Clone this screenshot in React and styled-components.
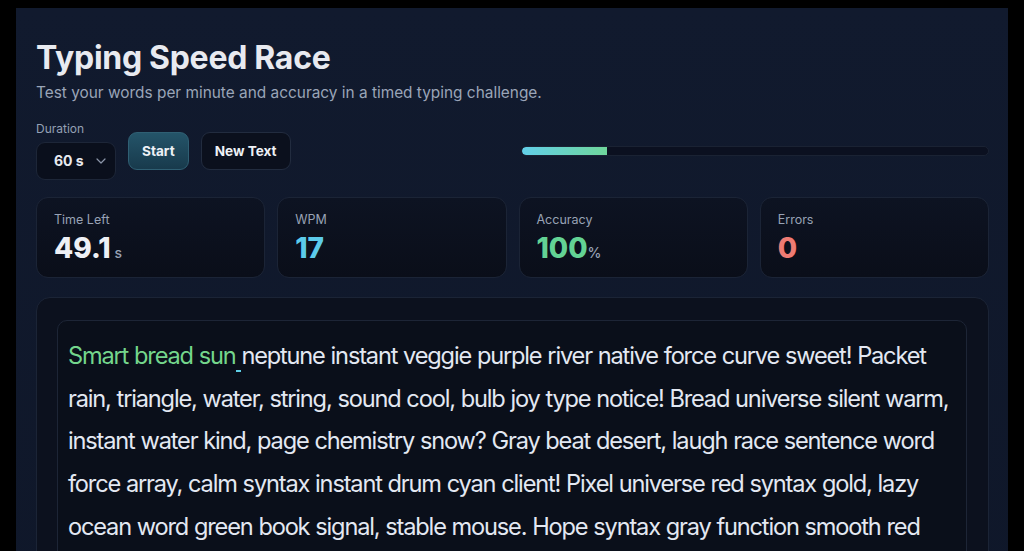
import styled, { createGlobalStyle } from "styled-components";

const GlobalStyle = createGlobalStyle`
  html, body {
    margin: 0;
    padding: 0;
    background: #000;
    overflow: hidden;
  }
  body {
    font-family: Inter, "Noto Sans", "Liberation Sans", sans-serif;
    color: #e5e7eb;
  }
`

const Panel = styled.main`
  margin: 8px 16px 0;
  padding: 20px 19px 40px 20px;
  background: linear-gradient(180deg, #111a2e 0%, #0f1729 100%);
  min-height: 600px;
`

const Title = styled.h1`
  margin: 10px 0 0;
  font-size: 32px;
  font-weight: 700;
  line-height: 40px;
  color: #e8eaf0;
  letter-spacing: -0.3px;
`

const Subtitle = styled.p`
  margin: 4px 0 0;
  font-size: 15.4px;
  line-height: 22px;
  color: #9aa5b8;
`

const Controls = styled.div`
  display: flex;
  align-items: center;
  gap: 12px;
  margin-top: 18px;
`

const Field = styled.label`
  display: flex;
  flex-direction: column;
  gap: 6px;
  font-size: 12px;
  line-height: 14px;
  color: #94a0b4;
`

const SelectBox = styled.div`
  position: relative;
  width: 80px;
  height: 38px;
  box-sizing: border-box;
  border: 1px solid #1d2638;
  border-radius: 9px;
  background: #0a0f1c;
  display: flex;
  align-items: center;
  padding: 0 0 0 17px;
  font-size: 14px;
  font-weight: 700;
  color: #e8eaf0;

  svg {
    position: absolute;
    right: 9px;
    top: 15px;
  }
`

const Button = styled.button`
  height: 38px;
  box-sizing: border-box;
  padding: 0 13px;
  border-radius: 9px;
  font-family: inherit;
  font-size: 13.6px;
  font-weight: 700;
  color: #eef1f6;
  border: 1px solid ${(p) => (p.$primary ? "#2f5f73" : "#222c3f")};
  background: ${(p) =>
    p.$primary
      ? "linear-gradient(180deg, #245469 0%, #183a4c 100%)"
      : "#0b101d"};
  cursor: pointer;
`

const Progress = styled.div`
  margin-left: auto;
  width: 468px;
  height: 10px;
  box-sizing: border-box;
  border-radius: 6px;
  background: #0b1020;
  border: 1px solid #1a2233;
  overflow: hidden;
`

const ProgressFill = styled.div`
  height: 100%;
  border-radius: 6px 0 0 6px;
  background: linear-gradient(90deg, #62cfe9 0%, #6fd69b 100%);
`

const Stats = styled.div`
  display: grid;
  grid-template-columns: repeat(4, 1fr);
  gap: 12px;
  margin-top: 17px;
`

const Card = styled.div`
  height: 81px;
  box-sizing: border-box;
  padding: 14px 17px;
  border: 1px solid #1b2436;
  border-radius: 12px;
  background: linear-gradient(180deg, #0d1322 0%, #0a0e19 100%);
`

const Label = styled.div`
  font-size: 12.5px;
  line-height: 16px;
  color: #98a2b5;
`

const Value = styled.div`
  margin-top: 3px;
  font-size: 28px;
  font-weight: 800;
  line-height: 34px;
  color: ${(p) => p.$color};
`

const Unit = styled.span`
  margin-left: ${(p) => p.$gap}px;
  font-size: 14px;
  font-weight: 500;
  color: #98a2b5;
`

const Arena = styled.section`
  margin-top: 19px;
  padding: 22px 21px 22px 20px;
  border: 1px solid #1b2436;
  border-radius: 14px;
  background: #0c111e;
`

const Passage = styled.div`
  padding: 14px 10px;
  border: 1px solid #1d2536;
  border-radius: 10px;
  background: #0a0f1a;
  font-size: 23.6px;
  line-height: 42.7px;
  letter-spacing: -1.17px;
  word-spacing: 0.4px;
  color: #e3e8f2;
`

const Typed = styled.span`
  color: #74d68c;
`

const Cursor = styled.span`
  border-bottom: 2px solid #5fd0e8;
`

const typed = "Smart bread sun";
const rest =
  "neptune instant veggie purple river native force curve sweet! Packet rain, triangle, water, string, sound cool, bulb joy type notice! Bread universe silent warm, instant water kind, page chemistry snow? Gray beat desert, laugh race sentence word force array, calm syntax instant drum cyan client! Pixel universe red syntax gold, lazy ocean word green book signal, stable mouse. Hope syntax gray function smooth red planet, river quiet window lamp story.";

export default function App() {
  const duration = 60;
  const timeLeft = 49.1;
  const progress = ((duration - timeLeft) / duration) * 100;

  return (
    <>
      <GlobalStyle />
      <Panel>
        <Title>Typing Speed Race</Title>
        <Subtitle>Test your words per minute and accuracy in a timed typing challenge.</Subtitle>
        <Controls>
          <Field>
            Duration
            <SelectBox>
              60 s
              <svg width="10" height="6" viewBox="0 0 10 6" fill="none">
                <path d="M1 1l4 4 4-4" stroke="#8b95a8" strokeWidth="1.2" strokeLinecap="round" strokeLinejoin="round" />
              </svg>
            </SelectBox>
          </Field>
          <Button $primary>Start</Button>
          <Button>New Text</Button>
          <Progress>
            <ProgressFill style={{ width: `${progress}%` }} />
          </Progress>
        </Controls>
        <Stats>
          <Card>
            <Label>Time Left</Label>
            <Value $color="#eef0f5">
              {timeLeft}
              <Unit $gap={4}>s</Unit>
            </Value>
          </Card>
          <Card>
            <Label>WPM</Label>
            <Value $color="#5ccbeb">17</Value>
          </Card>
          <Card>
            <Label>Accuracy</Label>
            <Value $color="#63d394">
              100
              <Unit $gap={0}>%</Unit>
            </Value>
          </Card>
          <Card>
            <Label>Errors</Label>
            <Value $color="#ee7b73">0</Value>
          </Card>
        </Stats>
        <Arena>
          <Passage>
            <Typed>{typed}</Typed>
            <Cursor> </Cursor>
            {rest}
          </Passage>
        </Arena>
      </Panel>
    </>
  );
}
